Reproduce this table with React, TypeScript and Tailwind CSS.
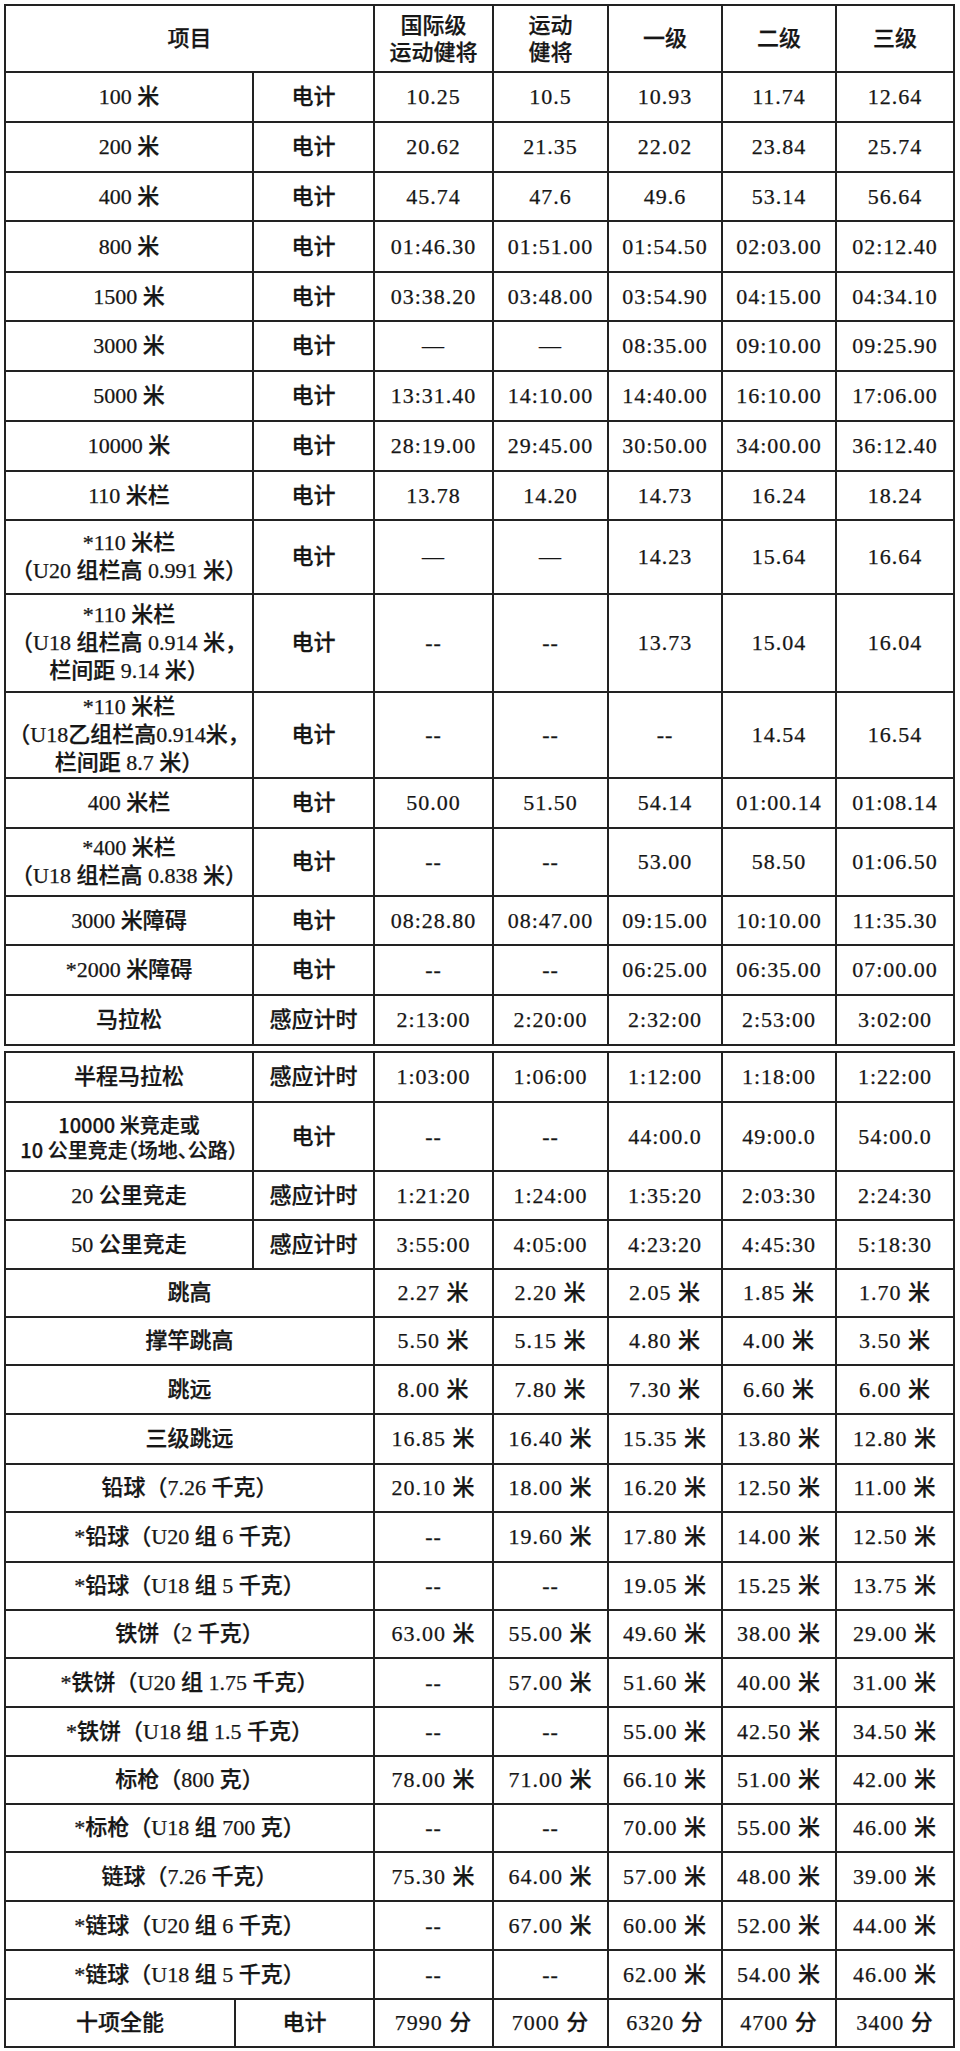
import React from "react"

type Track = { name: string[]; t: string; v: string[]; h: string; small?: boolean }
type Field = { name: string[]; v: string[]; h: string }

const cell = "border-2 border-[#222] p-0 text-center align-middle whitespace-nowrap"
const valueCell = `${cell} tracking-[1px]`

const table1: Track[] = [
  { name: ["100 米"], t: "电计", v: ["10.25", "10.5", "10.93", "11.74", "12.64"], h: "h-[50px]" },
  { name: ["200 米"], t: "电计", v: ["20.62", "21.35", "22.02", "23.84", "25.74"], h: "h-[50px]" },
  { name: ["400 米"], t: "电计", v: ["45.74", "47.6", "49.6", "53.14", "56.64"], h: "h-[49px]" },
  { name: ["800 米"], t: "电计", v: ["01:46.30", "01:51.00", "01:54.50", "02:03.00", "02:12.40"], h: "h-[51px]" },
  { name: ["1500 米"], t: "电计", v: ["03:38.20", "03:48.00", "03:54.90", "04:15.00", "04:34.10"], h: "h-[49px]" },
  { name: ["3000 米"], t: "电计", v: ["—", "—", "08:35.00", "09:10.00", "09:25.90"], h: "h-[50px]" },
  { name: ["5000 米"], t: "电计", v: ["13:31.40", "14:10.00", "14:40.00", "16:10.00", "17:06.00"], h: "h-[50px]" },
  { name: ["10000 米"], t: "电计", v: ["28:19.00", "29:45.00", "30:50.00", "34:00.00", "36:12.40"], h: "h-[50px]" },
  { name: ["110 米栏"], t: "电计", v: ["13.78", "14.20", "14.73", "16.24", "18.24"], h: "h-[49px]" },
  { name: ["*110 米栏", "（U20 组栏高 0.991 米）"], t: "电计", v: ["—", "—", "14.23", "15.64", "16.64"], h: "h-[74px]" },
  { name: ["*110 米栏", "（U18 组栏高 0.914 米，", "栏间距 9.14 米）"], t: "电计", v: ["--", "--", "13.73", "15.04", "16.04"], h: "h-[98px]" },
  { name: ["*110 米栏", "（U18乙组栏高0.914米，", "栏间距 8.7 米）"], t: "电计", v: ["--", "--", "--", "14.54", "16.54"], h: "h-[85px]" },
  { name: ["400 米栏"], t: "电计", v: ["50.00", "51.50", "54.14", "01:00.14", "01:08.14"], h: "h-[50px]" },
  { name: ["*400 米栏", "（U18 组栏高 0.838 米）"], t: "电计", v: ["--", "--", "53.00", "58.50", "01:06.50"], h: "h-[68px]" },
  { name: ["3000 米障碍"], t: "电计", v: ["08:28.80", "08:47.00", "09:15.00", "10:10.00", "11:35.30"], h: "h-[49px]" },
  { name: ["*2000 米障碍"], t: "电计", v: ["--", "--", "06:25.00", "06:35.00", "07:00.00"], h: "h-[50px]" },
  { name: ["马拉松"], t: "感应计时", v: ["2:13:00", "2:20:00", "2:32:00", "2:53:00", "3:02:00"], h: "h-[50px]" },
]

const track2: Track[] = [
  { name: ["半程马拉松"], t: "感应计时", v: ["1:03:00", "1:06:00", "1:12:00", "1:18:00", "1:22:00"], h: "h-[50px]" },
  { name: ["10000 米竞走或", "10 公里竞走（场地、公路）"], t: "电计", v: ["--", "--", "44:00.0", "49:00.0", "54:00.0"], h: "h-[69px]", small: true },
  { name: ["20 公里竞走"], t: "感应计时", v: ["1:21:20", "1:24:00", "1:35:20", "2:03:30", "2:24:30"], h: "h-[49px]" },
  { name: ["50 公里竞走"], t: "感应计时", v: ["3:55:00", "4:05:00", "4:23:20", "4:45:30", "5:18:30"], h: "h-[49px]" },
]

const field: Field[] = [
  { name: ["跳高"], v: ["2.27 米", "2.20 米", "2.05 米", "1.85 米", "1.70 米"], h: "h-[48px]" },
  { name: ["撑竿跳高"], v: ["5.50 米", "5.15 米", "4.80 米", "4.00 米", "3.50 米"], h: "h-[48px]" },
  { name: ["跳远"], v: ["8.00 米", "7.80 米", "7.30 米", "6.60 米", "6.00 米"], h: "h-[49px]" },
  { name: ["三级跳远"], v: ["16.85 米", "16.40 米", "15.35 米", "13.80 米", "12.80 米"], h: "h-[50px]" },
  { name: ["铅球（7.26 千克）"], v: ["20.10 米", "18.00 米", "16.20 米", "12.50 米", "11.00 米"], h: "h-[48px]" },
  { name: ["*铅球（U20 组 6 千克）"], v: ["--", "19.60 米", "17.80 米", "14.00 米", "12.50 米"], h: "h-[50px]" },
  { name: ["*铅球（U18 组 5 千克）"], v: ["--", "--", "19.05 米", "15.25 米", "13.75 米"], h: "h-[48px]" },
  { name: ["铁饼（2 千克）"], v: ["63.00 米", "55.00 米", "49.60 米", "38.00 米", "29.00 米"], h: "h-[48px]" },
  { name: ["*铁饼（U20 组 1.75 千克）"], v: ["--", "57.00 米", "51.60 米", "40.00 米", "31.00 米"], h: "h-[49px]" },
  { name: ["*铁饼（U18 组 1.5 千克）"], v: ["--", "--", "55.00 米", "42.50 米", "34.50 米"], h: "h-[49px]" },
  { name: ["标枪（800 克）"], v: ["78.00 米", "71.00 米", "66.10 米", "51.00 米", "42.00 米"], h: "h-[48px]" },
  { name: ["*标枪（U18 组 700 克）"], v: ["--", "--", "70.00 米", "55.00 米", "46.00 米"], h: "h-[48px]" },
  { name: ["链球（7.26 千克）"], v: ["75.30 米", "64.00 米", "57.00 米", "48.00 米", "39.00 米"], h: "h-[49px]" },
  { name: ["*链球（U20 组 6 千克）"], v: ["--", "67.00 米", "60.00 米", "52.00 米", "44.00 米"], h: "h-[49px]" },
  { name: ["*链球（U18 组 5 千克）"], v: ["--", "--", "62.00 米", "54.00 米", "46.00 米"], h: "h-[49px]" },
]

function Lines({ lines }: { lines: string[] }) {
  return (
    <>
      {lines.map((l, i) => (
        <React.Fragment key={i}>
          {i > 0 && <br />}
          {l}
        </React.Fragment>
      ))}
    </>
  )
}

function Values({ v }: { v: string[] }) {
  return (
    <>
      {v.map((x, i) => (
        <td key={i} className={valueCell}>
          {x}
        </td>
      ))}
    </>
  )
}

export default function App() {
  return (
    <div className="min-h-[2051px] bg-white pl-[4px] pt-[4px] font-['Liberation_Serif','Noto_Sans_CJK_SC',serif] text-[22px] font-medium leading-[28px] text-[#161616] [-webkit-text-stroke:0.25px]">
      <table className="w-[951px] table-fixed border-collapse">
        <colgroup>
          <col className="w-[248px]" />
          <col className="w-[121px]" />
          <col className="w-[119px]" />
          <col className="w-[115px]" />
          <col className="w-[114px]" />
          <col className="w-[114px]" />
          <col className="w-[118px]" />
        </colgroup>
        <tbody>
          <tr className="h-[67px]">
            <td colSpan={2} className={cell}>项目</td>
            <td className={`${cell} leading-[27px]`}>国际级<br />运动健将</td>
            <td className={`${cell} leading-[27px]`}>运动<br />健将</td>
            <td className={cell}>一级</td>
            <td className={cell}>二级</td>
            <td className={cell}>三级</td>
          </tr>
          {table1.map((r, i) => (
            <tr key={i} className={r.h}>
              <td className={cell}><Lines lines={r.name} /></td>
              <td className={cell}>{r.t}</td>
              <Values v={r.v} />
            </tr>
          ))}
        </tbody>
      </table>

      <table className="mt-[5px] w-[951px] table-fixed border-collapse">
        <colgroup>
          <col className="w-[230px]" />
          <col className="w-[18px]" />
          <col className="w-[121px]" />
          <col className="w-[119px]" />
          <col className="w-[115px]" />
          <col className="w-[114px]" />
          <col className="w-[114px]" />
          <col className="w-[118px]" />
        </colgroup>
        <tbody>
          {track2.map((r, i) => (
            <tr key={i} className={r.h}>
              <td
                colSpan={2}
                className={
                  r.small
                    ? `${cell} font-['Noto_Sans_CJK_SC',sans-serif] text-[20px] leading-[25px] [font-feature-settings:'halt']`
                    : cell
                }
              >
                <Lines lines={r.name} />
              </td>
              <td className={cell}>{r.t}</td>
              <Values v={r.v} />
            </tr>
          ))}
          {field.map((r, i) => (
            <tr key={i} className={r.h}>
              <td colSpan={3} className={cell}><Lines lines={r.name} /></td>
              <Values v={r.v} />
            </tr>
          ))}
          <tr className="h-[48px]">
            <td className={cell}>十项全能</td>
            <td colSpan={2} className={cell}>电计</td>
            <Values v={["7990 分", "7000 分", "6320 分", "4700 分", "3400 分"]} />
          </tr>
        </tbody>
      </table>
    </div>
  )
}
